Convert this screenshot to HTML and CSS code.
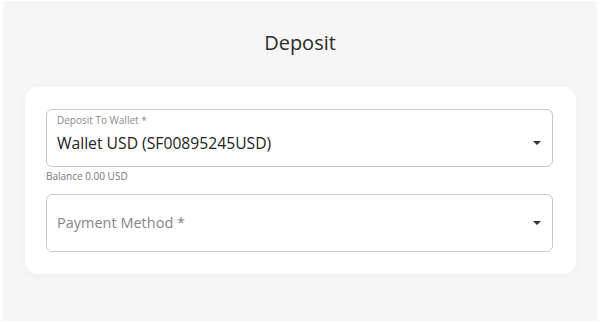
FILE: index.html
```html
<html>
<head>
    <title>Deposit</title>
    <meta charset="UTF-8">
    <link rel="stylesheet" href="styles.css">
</head>
<body>
    <div id="page">
        <div id="title">Deposit</div>

        <div id="deposit_card">
            <div class="select_field" id="wallet_field">
                <div class="select_text">
                    <div class="select_label">Deposit To Wallet *</div>
                    <div class="select_value">Wallet USD (SF00895245USD)</div>
                </div>
                <div class="select_arrow"></div>
            </div>

            <div id="balance_strap">Balance 0.00 USD</div>

            <div class="select_field" id="method_field">
                <div class="select_text">
                    <div class="select_placeholder">Payment Method *</div>
                </div>
                <div class="select_arrow"></div>
            </div>
        </div>
    </div>
</body>
</html>
```

FILE: styles.css
```css
body{
    margin: 0px;
    background-color: white;
    font-family: "Open Sans", "Noto Sans", sans-serif;
}

#page{
    margin: 1px 3px 2px 3px;
    height: 320px;
    background-color: #f6f6f6;
    padding-top: 28px;
    box-sizing: border-box;
}

#title{
    text-align: center;
    font-size: 20px;
    font-weight: 500;
    line-height: 28px;
    color: #2b2b2b;
}

#deposit_card{
    margin: 30px 21px 0px 22px;
    background-color: white;
    border-radius: 13px;
    padding: 22px 23px 22px 21px;
    box-shadow: 0 2px 8px rgba(0,0,0,0.03);
}

.select_field{
    display: flex;
    align-items: center;
    height: 58px;
    box-sizing: border-box;
    border: 1px solid #c9c9c9;
    border-radius: 6px;
    padding: 0px 11px 0px 10px;
}

#wallet_field{
    align-items: flex-start;
    padding-top: 4px;
}

.select_text{
    flex: 1;
}

.select_label{
    font-size: 10px;
    line-height: 13px;
    color: #8a8a8a;
}

.select_value{
    font-size: 15.7px;
    font-weight: 500;
    line-height: 22px;
    margin-top: 5px;
    color: #222;
}

.select_placeholder{
    font-size: 14.5px;
    line-height: 20px;
    color: #858585;
}

.select_arrow{
    width: 0px;
    height: 0px;
    border-left: 4px solid transparent;
    border-right: 4px solid transparent;
    border-top: 4px solid #333;
}

#wallet_field .select_arrow{
    margin-top: 27px;
}

#balance_strap{
    font-size: 10px;
    line-height: 13px;
    color: #777;
    margin: 3px 0px 11px 0px;
}
```
